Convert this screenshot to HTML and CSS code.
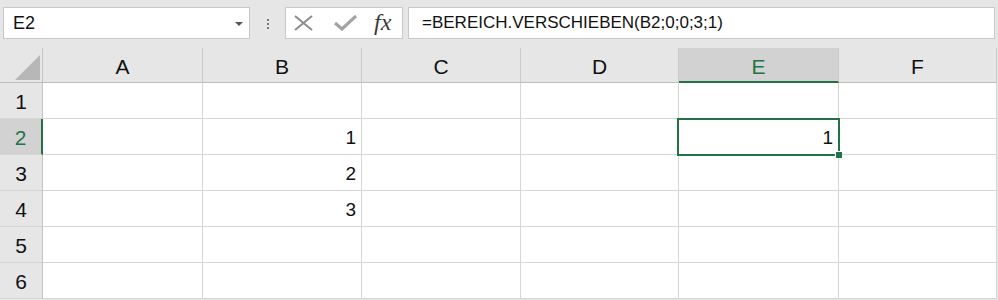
FILE: index.html
```html
<!DOCTYPE html>
<html lang="de">
<head>
    <meta charset="UTF-8">
    <title>Excel – BEREICH.VERSCHIEBEN</title>
    <link rel="stylesheet" href="styles.css">
</head>
<body>

<div class="toolbar">
    <div class="name-box">
        <span class="name-text">E2</span>
        <svg class="dropdown" width="8" height="4" viewBox="0 0 8 4"><path d="M0 0 L8 0 L4 4 Z" fill="#555"/></svg>
    </div>
    <div class="grip">
        <span></span><span></span><span></span>
    </div>
    <div class="fx-box">
        <svg class="icon" width="20" height="16" viewBox="0 0 20 16">
            <path d="M1 1 L18 15 M18 1 L1 15" stroke="#8c8c8c" stroke-width="2" fill="none"/>
        </svg>
        <svg class="icon" width="23" height="16" viewBox="0 0 23 16">
            <path d="M1 8 L8 14 L22 1" stroke="#a3a3a3" stroke-width="3.2" fill="none"/>
        </svg>
        <span class="fx">fx</span>
    </div>
    <div class="formula-box">=BEREICH.VERSCHIEBEN(B2;0;0;3;1)</div>
</div>

<div class="sheet">
    <div class="corner"><div class="triangle"></div></div>
    <div class="col-head">A</div>
    <div class="col-head">B</div>
    <div class="col-head">C</div>
    <div class="col-head">D</div>
    <div class="col-head active">E</div>
    <div class="col-head">F</div>

    <div class="row-head">1</div>
    <div class="cell"></div><div class="cell"></div><div class="cell"></div>
    <div class="cell"></div><div class="cell"></div><div class="cell"></div>

    <div class="row-head active">2</div>
    <div class="cell"></div><div class="cell">1</div><div class="cell"></div>
    <div class="cell"></div><div class="cell selected">1</div><div class="cell"></div>

    <div class="row-head">3</div>
    <div class="cell"></div><div class="cell">2</div><div class="cell"></div>
    <div class="cell"></div><div class="cell"></div><div class="cell"></div>

    <div class="row-head">4</div>
    <div class="cell"></div><div class="cell">3</div><div class="cell"></div>
    <div class="cell"></div><div class="cell"></div><div class="cell"></div>

    <div class="row-head">5</div>
    <div class="cell"></div><div class="cell"></div><div class="cell"></div>
    <div class="cell"></div><div class="cell"></div><div class="cell"></div>

    <div class="row-head">6</div>
    <div class="cell"></div><div class="cell"></div><div class="cell"></div>
    <div class="cell"></div><div class="cell"></div><div class="cell"></div>
</div>

</body>
</html>
```

FILE: styles.css
```css
body {
    margin: 0;
    background: #e6e6e6;
    font-family: 'Liberation Sans', Arial, sans-serif;
    color: #222;
    overflow: hidden;
}

.toolbar {
    display: flex;
    align-items: center;
    height: 48px;
    padding: 7px 3px 9px 3px;
    box-sizing: border-box;
}

.name-box,
.fx-box,
.formula-box {
    height: 32px;
    box-sizing: border-box;
    background: #fff;
    border: 1px solid #c8c8c8;
}

.name-box {
    width: 247px;
    display: flex;
    align-items: center;
    justify-content: space-between;
    padding: 0 6px 0 9px;
}

.name-text {
    font-size: 18px;
    color: #111;
}

.dropdown {
    margin-top: 1px;
}

.grip {
    width: 35px;
    display: flex;
    flex-direction: column;
    align-items: center;
    gap: 2px;
    margin-top: 1px;
}

.grip span {
    width: 2px;
    height: 2px;
    background: #7a7a7a;
}

.fx-box {
    width: 118px;
    display: flex;
    align-items: center;
    padding-left: 8px;
    gap: 20px;
}

.fx {
    font-family: 'Liberation Serif', 'Times New Roman', serif;
    font-style: italic;
    font-size: 24px;
    color: #3a3a3a;
    margin-left: -3px;
    margin-top: -2px;
}

.formula-box {
    flex: 1;
    margin-left: 5px;
    display: flex;
    align-items: center;
    padding-left: 13px;
    font-size: 17px;
    color: #111;
}

.sheet {
    display: grid;
    grid-template-columns: 43px 160px 159px 159px 158px 160px 158px;
    grid-template-rows: 35px repeat(6, 36px);
    background: #fff;
    width: 997px;
}

.corner,
.col-head,
.row-head {
    background: #e6e6e6;
    box-sizing: border-box;
}

.corner {
    position: relative;
    border-right: 1px solid #c4c4c4;
    border-bottom: 1px solid #bdbdbd;
}

.triangle {
    position: absolute;
    right: 2px;
    bottom: 2px;
    width: 0;
    height: 0;
    border-left: 25px solid transparent;
    border-bottom: 25px solid #b7b7b7;
}

.col-head {
    display: flex;
    align-items: flex-end;
    justify-content: center;
    padding-bottom: 3px;
    font-size: 21px;
    color: #111;
    border-bottom: 1px solid #bdbdbd;
    border-right: 1px solid #cacaca;
}

.col-head.active {
    background: #d2d2d2;
    color: #217346;
    border-bottom: 2px solid #217346;
    padding-bottom: 2px;
}

.row-head {
    display: flex;
    align-items: flex-end;
    justify-content: center;
    padding-bottom: 4px;
    font-size: 21px;
    color: #111;
    border-right: 1px solid #c4c4c4;
    border-bottom: 1px solid #d6d6d6;
}

.row-head.active {
    background: #d2d2d2;
    color: #217346;
    border-right: 2px solid #217346;
}

.cell {
    display: flex;
    align-items: flex-end;
    justify-content: flex-end;
    padding: 0 5px 5px 0;
    box-sizing: border-box;
    font-size: 19px;
    color: #111;
    border-right: 1px solid #d6d6d6;
    border-bottom: 1px solid #d6d6d6;
}

.cell.selected {
    position: relative;
}

.cell.selected::before {
    content: "";
    position: absolute;
    left: -2px;
    top: -1px;
    right: -2px;
    bottom: -2px;
    border: 2px solid #217346;
}

.cell.selected::after {
    content: "";
    position: absolute;
    right: -4px;
    bottom: -4px;
    width: 6px;
    height: 6px;
    background: #217346;
    border-left: 1px solid #fff;
    border-top: 1px solid #fff;
}
```
